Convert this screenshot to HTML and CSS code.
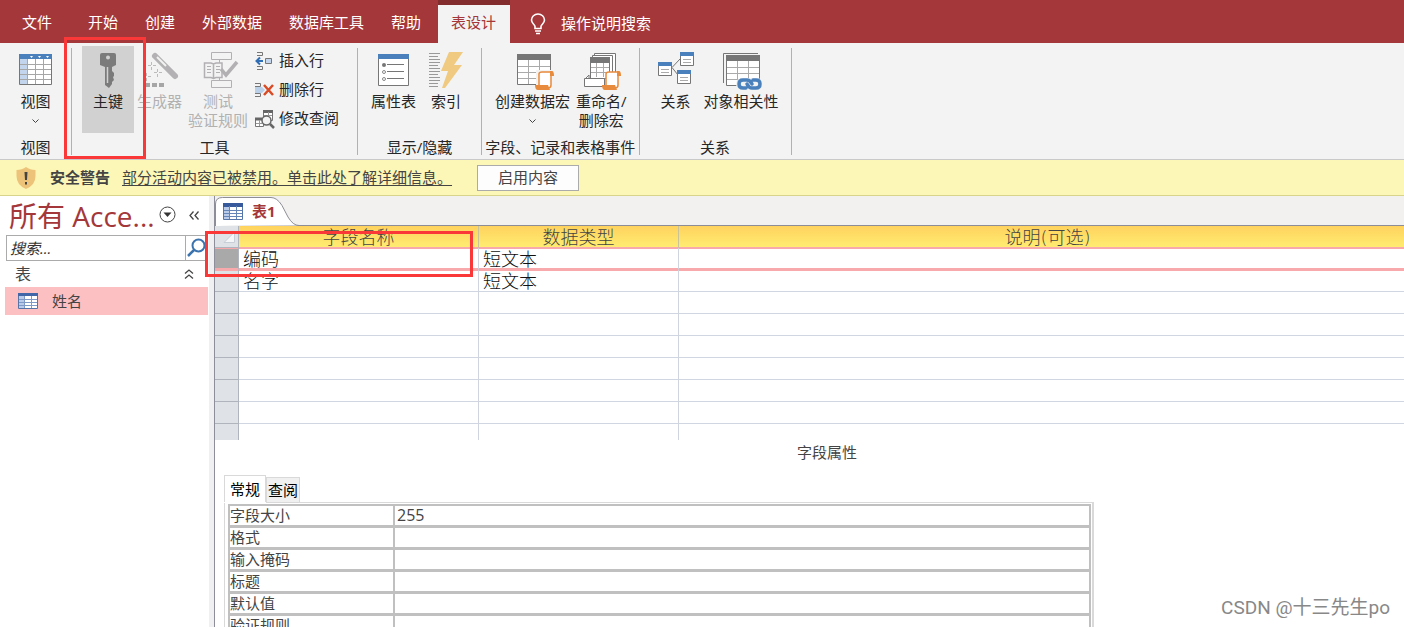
FILE: index.html
```html
<!DOCTYPE html>
<html lang="zh-CN">
<head>
<meta charset="utf-8">
<title>表设计</title>
<link rel="stylesheet" href="styles.css">
</head>
<body>
<header class="tabs">
  <button class="tab tab-file">文件</button>
  <button class="tab">开始</button>
  <button class="tab">创建</button>
  <button class="tab">外部数据</button>
  <button class="tab">数据库工具</button>
  <button class="tab">帮助</button>
  <button class="tab tab-active">表设计</button>
  <button class="tell-me">
    <svg width="16" height="22" viewBox="0 0 16 22" fill="none" stroke="#fff" stroke-width="1.6"><path d="M5 15.500V13.500C5 11.500 1.500 10.500 1.500 7a6.500 6 0 0 1 13 0C14.500 10.500 11 11.500 11 13.500V15.500ZM5 18H11M6 20.500H10"/></svg>
    <span>操作说明搜索</span>
  </button>
</header>

<nav class="ribbon">
  <section class="group group-view">
    <div class="items">
      <button class="big">
        <svg class="icon" viewBox="0 0 36 36"><path fill="#fff" stroke="#767676" d="M1.500 2.500h32v30h-32z"/><path fill="#c3d5ec" d="M2 7h8v25H2z"/><path fill="#4a80bb" d="M1 2h33v5H1z"/><path stroke="#a6a6a6" d="M2 12.500h31M2 17.500h31M2 22.500h31M2 27.500h31M9.500 7v25M17.500 7v25M25.500 7v25"/><path fill="#fff" d="M12 4h3l-1.500 2zM20 4h3l-1.500 2zM28 4h3l-1.500 2z"/></svg>
        <span>视图</span>
        <svg class="caret" viewBox="0 0 7 4"><path d="M.5.5l3 3 3-3"/></svg>
      </button>
    </div>
    <h2>视图</h2>
  </section>
  <span class="divider"></span>
  <section class="group group-tools">
    <div class="items">
      <button class="big pressed">
        <svg class="icon" viewBox="0 0 36 36"><path fill="#7b7b7b" fill-rule="evenodd" d="M12 1h12q2 0 2 2v10l-4 2v4l2 2v3l-1 1 1 3-2 2v2l-3 4-4-3V15l-5-2V3q0-2 2-2zM18 3.500a2 2 0 1 0 0 4 2 2 0 0 0 0-4z"/><path stroke="#d1d1d1" stroke-width="1.500" d="M17.500 15v16"/></svg>
        <span>主键</span>
      </button>
      <button class="big" disabled>
        <svg class="icon" viewBox="0 0 36 36"><path stroke="#b3b1b3" stroke-width="6" stroke-linecap="round" d="M13 4L33 24"/><path stroke="#f3f3f3" stroke-width="2" d="M15 5l9 9"/><path stroke="#bbb" d="M9.500 10v3M9.500 15v3M6 13.500h3M11 13.500h3M15.500 17v3M15.500 22v3M12 20.500h3M17 20.500h3M4.500 21v3M4.500 26v3M1 24.500h3M6 24.500h3"/><path fill="#a6a6a6" d="M3 31h5v4H3zM10 31h5v4h-5zM17 31h5v4h-5z"/></svg>
        <span>生成器</span>
      </button>
      <button class="big" disabled>
        <svg class="icon" viewBox="0 0 36 36" fill="#f5f0f6" stroke="#b3b0b3"><path d="M11.500.5h20v7h-20zM11.500 28.500h20v7h-20zM19.500 8v3M19.500 25v3"/><path stroke-width="1.500" d="M4.500 11H11l2.500 1 2.500-1h6v14.500h-6l-2.500 1-2.500-1H4.500zM13.500 12v14"/><path d="M7 14.500h4M7 17.500h4M7 20.500h4M16 14.500h4M16 17.500h4M16 20.500h4"/><path fill="none" stroke-width="3.500" d="M21 17l5 6L37 10"/></svg>
        <span>测试<br>验证规则</span>
      </button>
      <div class="small-list">
        <button class="small">
          <svg viewBox="0 0 18 18" fill="none"><path stroke="#767676" d="M2 .5h5.500v3H2M2 17.500h5.500v-3H2"/><path stroke="#2f6eb5" stroke-width="2" d="M8 9H2M5 5.500L1.500 9 5 12.500"/><path fill="#c3d5ec" stroke="#767676" d="M10.500 6.500h6v5h-6z"/></svg>
          <span>插入行</span>
        </button>
        <button class="small">
          <svg viewBox="0 0 18 18" fill="none"><path stroke="#767676" d="M0 2.500h5.500v3H0M0 15.500h5.500v-3H0"/><path fill="#b9d0e8" d="M0 6h7l3 3-3 3H0z"/><path stroke="#d84b24" stroke-width="2.500" d="M9 4l9 10M18 4l-9 10"/></svg>
          <span>删除行</span>
        </button>
        <button class="small">
          <svg viewBox="0 0 18 18" fill="none"><path fill="#fff" stroke="#767676" d="M8.500.5h9v10h-9zM.5 8.500h8v8h-8z"/><path stroke="#666" stroke-width="3" d="M8 1.500h10M0 9h7"/><path stroke="#999" d="M9 5.500h8M13.500 2v4M1 13.500h6M4.500 10v6"/><circle cx="11.500" cy="10.500" r="4.500" fill="#f3f3f3" stroke="#666" stroke-width="1.500"/><path stroke="#666" stroke-width="2.500" d="M15 14l4 4"/></svg>
          <span>修改查阅</span>
        </button>
      </div>
    </div>
    <h2>工具</h2>
  </section>
  <span class="divider"></span>
  <section class="group group-show">
    <div class="items">
      <button class="big">
        <svg class="icon" viewBox="0 0 36 36"><path fill="#fff" stroke="#767676" d="M2.500 2.500h30v31h-30z"/><path fill="#4a80bb" d="M2 2h31v5H2z"/><path stroke="#767676" d="M11 12.500h17M11 19.500h17M11 26.500h17"/><circle cx="8" cy="13" r="2" fill="#767676"/><circle cx="8" cy="20" r="1.500" fill="#fff" stroke="#888"/><circle cx="8" cy="27" r="1.500" fill="#fff" stroke="#888"/></svg>
        <span>属性表</span>
      </button>
      <button class="big">
        <svg class="icon" viewBox="0 0 36 36"><path stroke="#999" d="M1 1.500h11M1 4.500h9M1 7.500h11M1 10.500h11M1 13.500h9M1 16.500h11M1 19.500h11M1 22.500h9M1 25.500h11M1 28.500h11M1 31.500h9M1 34.500h9"/><path fill="#f0ca80" d="M21 0h14l-9 13h8L17 36h-3l6-17h-7z"/></svg>
        <span>索引</span>
      </button>
    </div>
    <h2>显示/隐藏</h2>
  </section>
  <span class="divider"></span>
  <section class="group group-events">
    <div class="items">
      <button class="big">
        <svg class="icon" viewBox="0 0 36 36"><path fill="#fff" stroke="#767676" d="M2.500 2.500h33v30h-33z"/><path fill="#767676" d="M2 2h34v6H2z"/><path stroke="#aaa" d="M3 14.500h32M3 20.500h32M3 26.500h32M13.500 8v24M24.500 8v24"/><path fill="#fff" stroke="#f3f3f3" stroke-width="4" d="M23 20h14v16H23z"/><path fill="#fff" stroke="#e88b3d" stroke-width="1.500" d="M24 34V22q0-2 3-2h9v13q0 3-3 3H23"/><path fill="#e88b3d" d="M20 33h13l2 5H23q-3 0-3-5zM35 19h2q2 0 2 5h-4z"/></svg>
        <span>创建数据宏</span>
        <svg class="caret" viewBox="0 0 7 4"><path d="M.5.5l3 3 3-3"/></svg>
      </button>
      <button class="big">
        <svg class="icon" viewBox="0 0 36 36"><path fill="#fff" stroke="#767676" d="M11.500 1.500h21v22h-21z"/><path fill="#fff" stroke="#767676" d="M9.500 3.500h20v22h-20z"/><path fill="#fff" stroke="#767676" d="M7.500 5.500h19v21h-19z"/><path fill="#767676" d="M7 5h20v6H7z"/><path stroke="#aaa" d="M8 15.500h18M8 20.500h18M13.500 11v14M20.500 11v14"/><path fill="#fff" stroke="#767676" d="M1.500 26.500h20v8h-20zM3 26l3-3v3"/><path fill="#fff" stroke="#e88b3d" stroke-width="1.500" d="M23 34V22q0-2 3-2h9v13q0 3-3 3H22"/><path fill="#e88b3d" d="M19 33h13l2 5H22q-3 0-3-5zM34 19h2q2 0 2 5h-4z"/></svg>
        <span>重命名/<br>删除宏</span>
      </button>
    </div>
    <h2>字段、记录和表格事件</h2>
  </section>
  <span class="divider"></span>
  <section class="group group-relations">
    <div class="items">
      <button class="big">
        <svg class="icon" viewBox="0 0 36 36"><path stroke="#767676" d="M14 15.500L22 7M14 15.500L20 23"/><path fill="#fff" stroke="#767676" d="M.5 10.500h13v13H.5zM22.500.5h13v13h-13zM19.500 18.500h13v13h-13z"/><path fill="#4a80bb" d="M0 10h14v4H0zM22 0h14v4H22zM19 18h14v4H19z"/><path stroke="#aaa" d="M3 17.500h8M3 20.500h8M25 7.500h8M25 10.500h8M22 25.500h8M22 28.500h8"/></svg>
        <span>关系</span>
      </button>
      <button class="big">
        <svg class="icon" viewBox="0 0 36 36"><path fill="none" stroke="#767676" d="M.5 31V1.500H35"/><path fill="#fff" stroke="#767676" d="M3.500 3.500h33v30h-33z"/><path fill="#767676" d="M3 3h34v6H3z"/><path stroke="#aaa" d="M4 15.500h32M4 21.500h32M4 27.500h32M14.500 9v24M25.500 9v24"/><rect x="13" y="26" width="27" height="12" rx="6" fill="#f3f3f3"/><path fill="none" stroke="#4a80bb" stroke-width="3.500" stroke-linecap="round" d="M23 36h-3q-4 0-4-4t4-4h4q3 0 5 4M30 28h3q4 0 4 4t-4 4h-4q-3 0-5-4"/></svg>
        <span>对象相关性</span>
      </button>
    </div>
    <h2>关系</h2>
  </section>
  <span class="divider"></span>
</nav>

<div class="warning">
  <svg width="20" height="22" viewBox="0 0 20 22"><path fill="#edc37a" d="M10 0q4 3 9.500 3V9q0 9-9.500 13Q.5 18 .5 9V3Q6 3 10 0z"/><path fill="#444" d="M8.500 5h3l-.5 8H9zM9 15h2v2.500H9z"/></svg>
  <strong>安全警告</strong>
  <a href="#">部分活动内容已被禁用。单击此处了解详细信息。</a>
  <button class="enable">启用内容</button>
</div>

<div class="workspace">
  <aside class="pane">
    <div class="pane-head">
      <h1>所有 Acce...</h1>
      <button class="plain" aria-label="菜单"><svg width="17" height="17" viewBox="0 0 17 17"><circle cx="8.500" cy="8.500" r="7.500" fill="none" stroke="#444"/><path fill="#333" d="M4.500 6.500h8l-4 4.500z"/></svg></button>
      <button class="plain" aria-label="折叠"><svg width="12" height="12" viewBox="0 0 12 12" fill="none" stroke="#444" stroke-width="1.300"><path d="M5.500 2.500L2 6.500l3.500 4M10.500 2.500L7 6.500l3.500 4"/></svg></button>
    </div>
    <div class="search">
      <input type="text" placeholder="搜索..." aria-label="搜索">
      <button class="plain" aria-label="查找"><svg width="20" height="20" viewBox="0 0 20 20" fill="none" stroke="#3b73af"><circle cx="11.500" cy="7.500" r="6" stroke-width="2"/><path stroke-width="2.500" d="M7 12L1 18"/></svg></button>
    </div>
    <button class="section-head"><span>表</span><svg width="10" height="12" viewBox="0 0 10 12" fill="none" stroke="#444" stroke-width="1.300"><path d="M1 5.500L5 2l4 3.500M1 10.500L5 7l4 3.500"/></svg></button>
    <button class="object"><svg width="20" height="16" viewBox="0 0 20 16"><path fill="#fff" stroke="#5575a8" d="M.5.5h19v15H.5z"/><path fill="#4267a8" d="M0 0h20v3H0z"/><path fill="#b9cbe8" d="M1 3h5v12H1z"/><path stroke="#7f9ac6" d="M1 6.500h18M1 9.500h18M1 12.500h18M6.500 3v12M13.500 3v12"/></svg><span>姓名</span></button>
  </aside>

  <main class="document">
    <div class="doc-tabs">
      <button class="doc-tab">
        <svg class="tab-shape" width="84" height="30" viewBox="0 0 84 30"><path fill="#fff" stroke="#8d8d95" d="M.5 30V8q0-6.500 7-6.500H56q6 0 11 8l6 11.500q5 8.500 11 8.500"/></svg>
        <svg width="20" height="17" viewBox="0 0 20 17"><path fill="#fff" stroke="#5575a8" d="M.5.5h19v16H.5z"/><path fill="#365a9c" d="M0 0h20v4H0z"/><path fill="#b9cbe8" d="M1 4h5v12H1z"/><path stroke="#6584b8" d="M1 7.500h18M1 10.500h18M1 13.500h18M6.500 3v13M13.500 3v13"/></svg>
        <span>表1</span>
      </button>
    </div>
    <table class="fields">
      <colgroup><col class="col-select"><col class="col-name"><col class="col-type"><col></colgroup>
      <thead><tr><td class="corner"><svg width="12" height="12" viewBox="0 0 12 12"><path fill="#f4f6f8" stroke="#c8ced6" d="M11.500 1v10.500H1z"/></svg></td><th>字段名称</th><th>数据类型</th><th class="description">说明<span class="paren">(</span>可选<span class="paren">)</span></th></tr></thead>
      <tbody>
        <tr class="current"><td></td><td>编码</td><td>短文本</td><td></td></tr>
        <tr class="after-current"><td></td><td>名字</td><td>短文本</td><td></td></tr>
        <tr><td></td><td></td><td></td><td></td></tr>
        <tr><td></td><td></td><td></td><td></td></tr>
        <tr><td></td><td></td><td></td><td></td></tr>
        <tr><td></td><td></td><td></td><td></td></tr>
        <tr><td></td><td></td><td></td><td></td></tr>
        <tr><td></td><td></td><td></td><td></td></tr>
        <tr class="partial"><td></td><td></td><td></td><td></td></tr>
      </tbody>
    </table>
    <h2 class="caption">字段属性</h2>
    <div class="props">
      <div class="prop-tabs"><button class="prop-tab selected">常规</button><button class="prop-tab">查阅</button></div>
      <div class="prop-panel">
        <table class="prop-table">
          <tr><th><label for="size">字段大小</label></th><td><input id="size" type="text" value="255"></td></tr>
          <tr><th><label for="format">格式</label></th><td><input id="format" type="text"></td></tr>
          <tr><th><label for="mask">输入掩码</label></th><td><input id="mask" type="text"></td></tr>
          <tr><th><label for="title">标题</label></th><td><input id="title" type="text"></td></tr>
          <tr><th><label for="default">默认值</label></th><td><input id="default" type="text"></td></tr>
          <tr><th><label for="rule">验证规则</label></th><td><input id="rule" type="text"></td></tr>
        </table>
      </div>
    </div>
  </main>
</div>
<div class="mark mark-key"></div>
<div class="mark mark-row"></div>
<div class="watermark">CSDN @十三先生po</div>
</body>
</html>
```
FILE: styles.css
```css
* { box-sizing: border-box; }
body {
  margin: 0;
  height: 100vh;
  overflow: hidden;
  position: relative;
  display: flex;
  flex-direction: column;
  background: #fff;
  color: #262626;
  font: 15px/19px "Open Sans", "Noto Sans CJK SC", sans-serif;
}
button, input { font: inherit; color: inherit; border: 0; padding: 0; margin: 0; background: none; }
button { white-space: nowrap; }
svg { display: block; flex: none; overflow: visible; }
h1, h2 { margin: 0; font-weight: 400; }

.tabs { flex: none; display: flex; gap: 1px; height: 43px; padding-left: 9px; background: #a4373a; color: #fff; }
.tab { padding: 2px 13px 0; }
.tab-file { margin-right: 9px; }
.tab-active { margin-left: 3px; background: #f3f3f3; color: #a4373a; border-top: 5px solid #822c2e; padding: 0 14px 3px 13px; }
.tell-me { display: flex; align-items: center; gap: 15px; padding: 4px 0 0 19px; }

.ribbon { flex: none; display: flex; height: 117px; padding-top: 3px; background: #f3f3f3; border-bottom: 1px solid #c9c9c9; }
.group { display: flex; flex-direction: column; justify-content: space-between; padding-bottom: 2px; }
.group h2 { font-size: 15px; text-align: center; }
.items { display: flex; align-items: flex-start; }
.divider { width: 1px; margin: 2px 0 4px; background: #b1b1b1; }
.big { display: flex; flex-direction: column; align-items: center; padding: 6px 3px 0; height: 87px; }
.big span { margin-top: 4px; }
.big:disabled { color: #b1b1b1; }
.icon { width: 36px; height: 36px; fill: none; }
.caret { width: 7px; height: 4px; margin-top: 8px; fill: none; stroke: #444; }
.pressed { background: #d1d1d1; width: 52px; }
.small-list { padding-left: 4px; }
.small { display: flex; align-items: center; gap: 6px; height: 29px; }
.small svg { width: 18px; height: 18px; }
.group-view { width: 71px; }
.group-view .items { justify-content: center; }
.group-tools .items { padding: 0 18px 0 10px; }
.group-show .items { padding: 0 14px 0 10px; gap: 6px; }
.group-events .items { padding: 0 9px 0 10px; }
.group-relations .items { padding: 0 9px 0 15px; gap: 4px; }

.warning { flex: none; display: flex; align-items: center; height: 36px; padding-left: 16px; background: #fcf7b6; border-bottom: 1px solid #d8d48c; color: #444; }
.warning strong { margin: 0 12px 0 14px; }
.warning a { color: #444; text-underline-offset: 2px; }
.enable { margin-left: 25px; width: 102px; height: 26px; background: #fdfdfd; border: 1px solid #ababab; }

.workspace { flex: 1; min-height: 0; display: flex; }
.pane { flex: none; width: 214px; border-right: 5px solid #f0f0f2; padding: 0 1px 0 5px; display: flex; flex-direction: column; color: #444; }
.pane-head { display: flex; align-items: center; height: 39px; padding: 0 8px 2px 4px; gap: 12px; }
.pane-head h1 { flex: 1; padding-top: 3px; font-size: 28px; line-height: 34px; color: #a4373a; white-space: nowrap; }
.pane-head .plain:nth-child(2) { margin-left: -12px; }
.plain { display: flex; }
.search { display: flex; height: 26px; margin-left: 1px; border: 1px solid #ababab; border-right: 0; }
.search input { flex: 1; min-width: 0; padding-left: 3px; font-style: italic; }
.search input::placeholder { color: #333; opacity: 1; }
.search .plain { padding: 2px 1px; border-left: 1px solid #ababab; }
.section-head { display: flex; align-items: center; justify-content: space-between; height: 26px; padding: 0 14px 0 10px; font-size: 16px; }
.object { display: flex; align-items: center; gap: 14px; height: 28px; padding-left: 13px; background: #fcc0c3; }

.document { flex: 1; min-width: 0; border-left: 1px solid #8c8f99; }
.doc-tabs { height: 30px; background: #f2f1f0; border-bottom: 1px solid #8d8d95; }
.doc-tab { position: relative; display: flex; align-items: center; gap: 9px; height: 30px; padding-left: 8px; color: #a4373a; font-weight: 700; }
.doc-tab > * { position: relative; }
.doc-tab .tab-shape { position: absolute; left: 0; top: 0; }

.fields { width: 100%; table-layout: fixed; border-spacing: 0; font-size: 18px; line-height: 20px; color: #111; }
.col-select { width: 24px; }
.col-name { width: 240px; }
.col-type { width: 200px; }
.fields tr { height: 22px; }
.fields .partial { height: 16px; }
.fields td, .fields th { padding: 0 0 0 4px; height: inherit; border-right: 1px solid #d0d4df; border-bottom: 1px solid #d0d7e2; font-weight: 300; }
.fields .partial td { border-bottom: 0; }
.fields td:first-child { background: #dfe2e6; border-color: #b0b4bd; }
.fields tr > :last-child { border-right: 0; }
.fields th { padding: 0; background: linear-gradient(#ffd25e, #ffec70); border-right-color: #c8c39a; border-bottom-color: #f8a9ab; color: #444; }
.fields .corner { padding-left: 8px; border-bottom-color: #f8a9ab; border-right-color: #dfe2e6; }
.fields .description { padding-left: 12px; }
.paren { font-family: "DejaVu Sans", sans-serif; line-height: 1; }
.fields .current td { border-bottom-color: #f8a9ab; box-shadow: inset 0 1px #f8a9ab, inset 0 -1px #f8a9ab; }
.fields .current td:first-child { background: #a9a9a9; }
.fields .after-current td { box-shadow: inset 0 1px #f8a9ab; }

.caption { padding: 3px 0 0 35px; font-size: 15px; text-align: center; color: #444; }
.props { width: calc(73% + 2px); margin: 13px 0 0 9px; }
.prop-tabs { display: flex; align-items: flex-end; height: 27px; }
.prop-tab { width: 34px; height: 25px; border: 1px solid #d9d9d9; border-bottom: 0; background: #f0f0f0; color: #000; }
.prop-tab.selected { position: relative; width: 42px; height: 27px; background: #fff; box-shadow: 0 1px #fff; }
.prop-panel { padding: 1px 1px 0 3px; border: 1px solid #d9d9d9; border-right-width: 2px; }
.prop-table { width: 100%; table-layout: fixed; border-collapse: separate; border-spacing: 0; border: 2px solid #c0c0c0; color: #444; }
.prop-table th, .prop-table td { height: 22px; padding: 0; border-bottom: 3px solid #c0c0c0; }
.prop-table tr:first-child > * { height: 21px; }
.prop-table th { width: 165px; text-align: left; font-weight: 400; border-right: 2px solid #c0c0c0; }
.prop-table label { display: block; }
.prop-table input { display: block; width: 100%; height: 18px; padding-left: 2px; font-size: 16px; }

.mark { position: absolute; border: 3px solid #fb3838; pointer-events: none; }
.mark-key { left: 64px; top: 37px; width: 82px; height: 122px; }
.mark-row { left: 205px; top: 231px; width: 268px; height: 46px; }
.watermark { position: absolute; right: 14px; bottom: 6px; font-family: Roboto, "Noto Sans CJK SC", sans-serif; font-size: 19px; line-height: 26px; color: #888; }
```
